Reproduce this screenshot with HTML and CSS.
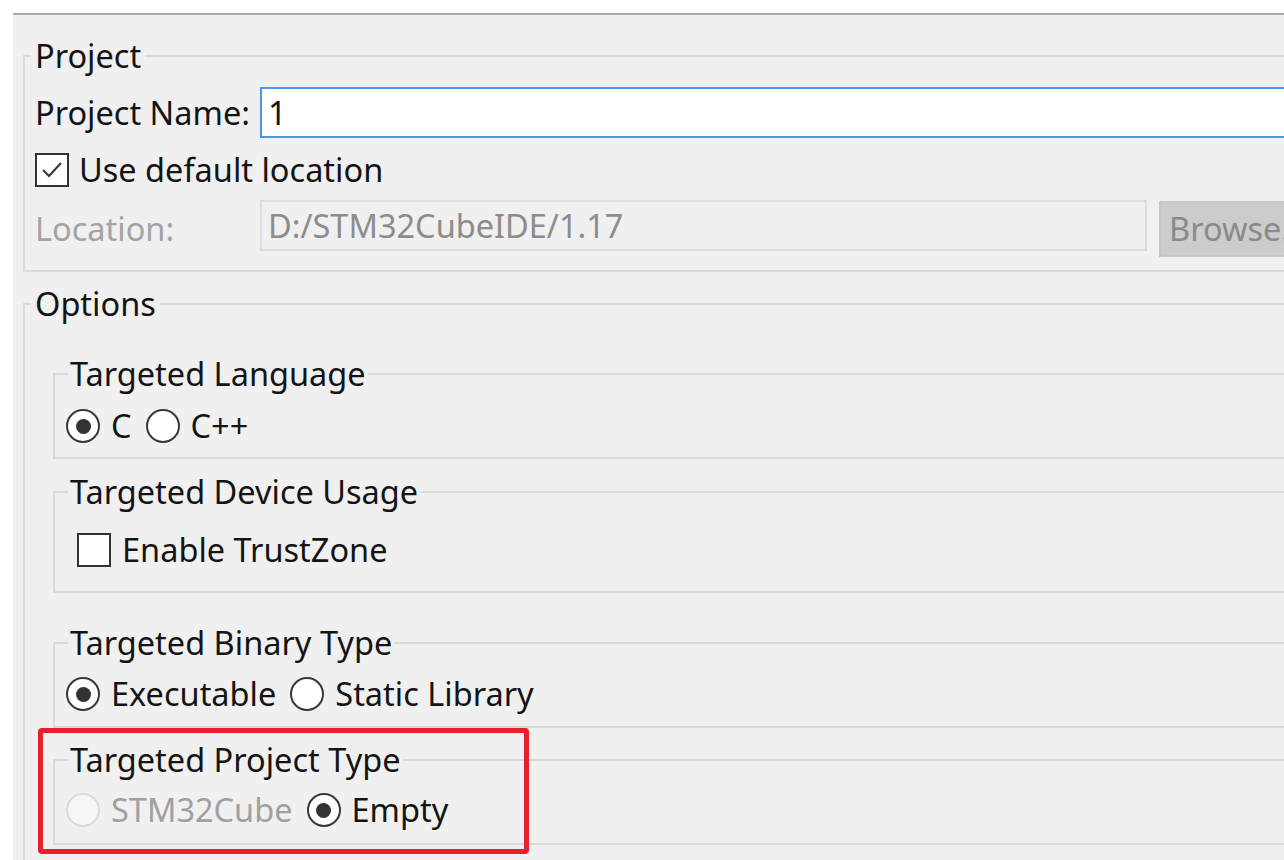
FILE: index.html
```html
<!DOCTYPE html>
<html lang="en">
<head>
    <meta charset="UTF-8">
    <meta name="viewport" content="width=device-width, initial-scale=1.0">
    <title>New STM32 Project - Setup</title>
    <link rel="stylesheet" href="styles.css">
</head>
<body>
    <div class="dialog">
        <fieldset class="group">
            <legend>Project</legend>
            <div class="group-body">
                <div class="row-name">
                    <span class="field-label">Project Name:</span>
                    <div class="text-field name-field">1</div>
                </div>
                <div class="row-check">
                    <span class="checkbox">
                        <svg width="26" height="26" viewBox="0 0 26 26"><polyline points="4,13 10,19 22,6" fill="none" stroke="#333" stroke-width="2"/></svg>
                    </span>
                    <span>Use default location</span>
                </div>
                <div class="row-location">
                    <span class="field-label disabled">Location:</span>
                    <div class="text-field location-field">D:/STM32CubeIDE/1.17</div>
                    <div class="browse">Browse...</div>
                </div>
            </div>
        </fieldset>

        <fieldset class="group options">
            <legend>Options</legend>

            <fieldset class="subgroup lang">
                <legend>Targeted Language</legend>
                <div class="choices">
                    <span class="option"><span class="radio on"></span>C</span>
                    <span class="option"><span class="radio"></span>C++</span>
                </div>
            </fieldset>

            <fieldset class="subgroup device">
                <legend>Targeted Device Usage</legend>
                <div class="choices">
                    <span class="option trustzone"><span class="checkbox"></span>Enable TrustZone</span>
                </div>
            </fieldset>

            <fieldset class="subgroup binary">
                <legend>Targeted Binary Type</legend>
                <div class="choices">
                    <span class="option"><span class="radio on"></span>Executable</span>
                    <span class="option"><span class="radio"></span>Static Library</span>
                </div>
            </fieldset>

            <fieldset class="subgroup ptype">
                <legend>Targeted Project Type</legend>
                <div class="choices">
                    <span class="option disabled"><span class="radio"></span>STM32Cube</span>
                    <span class="option"><span class="radio on"></span>Empty</span>
                </div>
            </fieldset>
        </fieldset>
    </div>

    <div class="highlight"></div>
</body>
</html>
```

FILE: styles.css
```css
body {
    margin: 0;
    background-color: #ffffff;
    font-family: "Noto Sans", "Open Sans", sans-serif;
    font-size: 32.5px;
    color: #141414;
    overflow: hidden;
    height: 860px;
}
.dialog {
    margin: 13px 0 0 13px;
    width: 1500px;
    height: 900px;
    border-top: 2px solid #ababab;
    background-color: #f0f0f0;
    padding: 0 0 0 10px;
    box-sizing: border-box;
}
fieldset {
    margin: 0;
    min-width: 0;
    border: 2px solid #dadada;
}
legend {
    line-height: 36px;
    padding: 0 4px;
}
.group {
    padding: 0 0 0 6px;
}
.group:first-child {
    margin-top: 23px;
    padding-top: 13px;
    padding-bottom: 13px;
}
.group-body {
    padding-left: 4px;
}
.row-name {
    display: flex;
    align-items: center;
    height: 51px;
}
.field-label {
    width: 225px;
    flex-shrink: 0;
}
.field-label.disabled {
    color: #a3a3a3;
    align-self: center;
}
.text-field {
    box-sizing: border-box;
    height: 51px;
    display: flex;
    align-items: center;
    padding-left: 6px;
}
.name-field {
    flex: 1;
    background-color: #ffffff;
    border: 2px solid #4a96e8;
}
.row-check {
    display: flex;
    align-items: center;
    gap: 10px;
    margin-top: 14px;
    height: 35px;
}
.checkbox {
    width: 34px;
    height: 34px;
    box-sizing: border-box;
    border: 2px solid #333333;
    background-color: #ffffff;
    display: inline-flex;
    align-items: center;
    justify-content: center;
    flex-shrink: 0;
}
.row-location {
    display: flex;
    align-items: flex-start;
    margin-top: 13px;
    height: 57px;
}
.location-field {
    width: 887px;
    background-color: #f0f0f0;
    border: 2px solid #dcdcdc;
    color: #8c8c8c;
}
.browse {
    margin: 1px 0 0 12px;
    width: 160px;
    height: 56px;
    box-sizing: border-box;
    background-color: #cccccc;
    border: 2px solid #c6c6c6;
    color: #8a8a8a;
    padding-left: 8px;
    line-height: 52px;
    white-space: nowrap;
}
.options {
    margin-top: 14px;
    padding-bottom: 40px;
}
.subgroup {
    margin-left: 22px;
    padding: 0 0 0 13px;
}
.subgroup legend {
    padding: 0 2px;
}
.choices {
    display: flex;
    align-items: center;
    height: 34px;
    line-height: 34px;
    margin-left: -2px;
}
.option {
    display: inline-flex;
    align-items: center;
    gap: 11px;
    margin-right: 14px;
}
.option.disabled {
    color: #a0a0a0;
}
.radio {
    width: 34px;
    height: 34px;
    box-sizing: border-box;
    border-radius: 50%;
    border: 2px solid #383838;
    background-color: #ffffff;
    display: inline-flex;
    align-items: center;
    justify-content: center;
}
.radio.on::after {
    content: '';
    width: 15px;
    height: 15px;
    border-radius: 50%;
    background-color: #333333;
}
.option.disabled .radio {
    border-color: #dadada;
    background-color: #f6f6f6;
}
.lang {
    margin-top: 34px;
    padding-top: 17px;
    padding-bottom: 14px;
}
.device {
    margin-top: 15px;
    padding-top: 23px;
    padding-bottom: 24px;
}
.trustzone {
    margin-left: 11px;
}
.binary {
    margin-top: 32px;
    padding-top: 16px;
    padding-bottom: 15px;
}
.ptype {
    margin-top: 14px;
    padding-top: 15px;
    padding-bottom: 16px;
}
.highlight {
    position: absolute;
    left: 38px;
    top: 728px;
    width: 491px;
    height: 126px;
    box-sizing: border-box;
    border: 5px solid #e8202b;
    border-radius: 4px;
}
```
